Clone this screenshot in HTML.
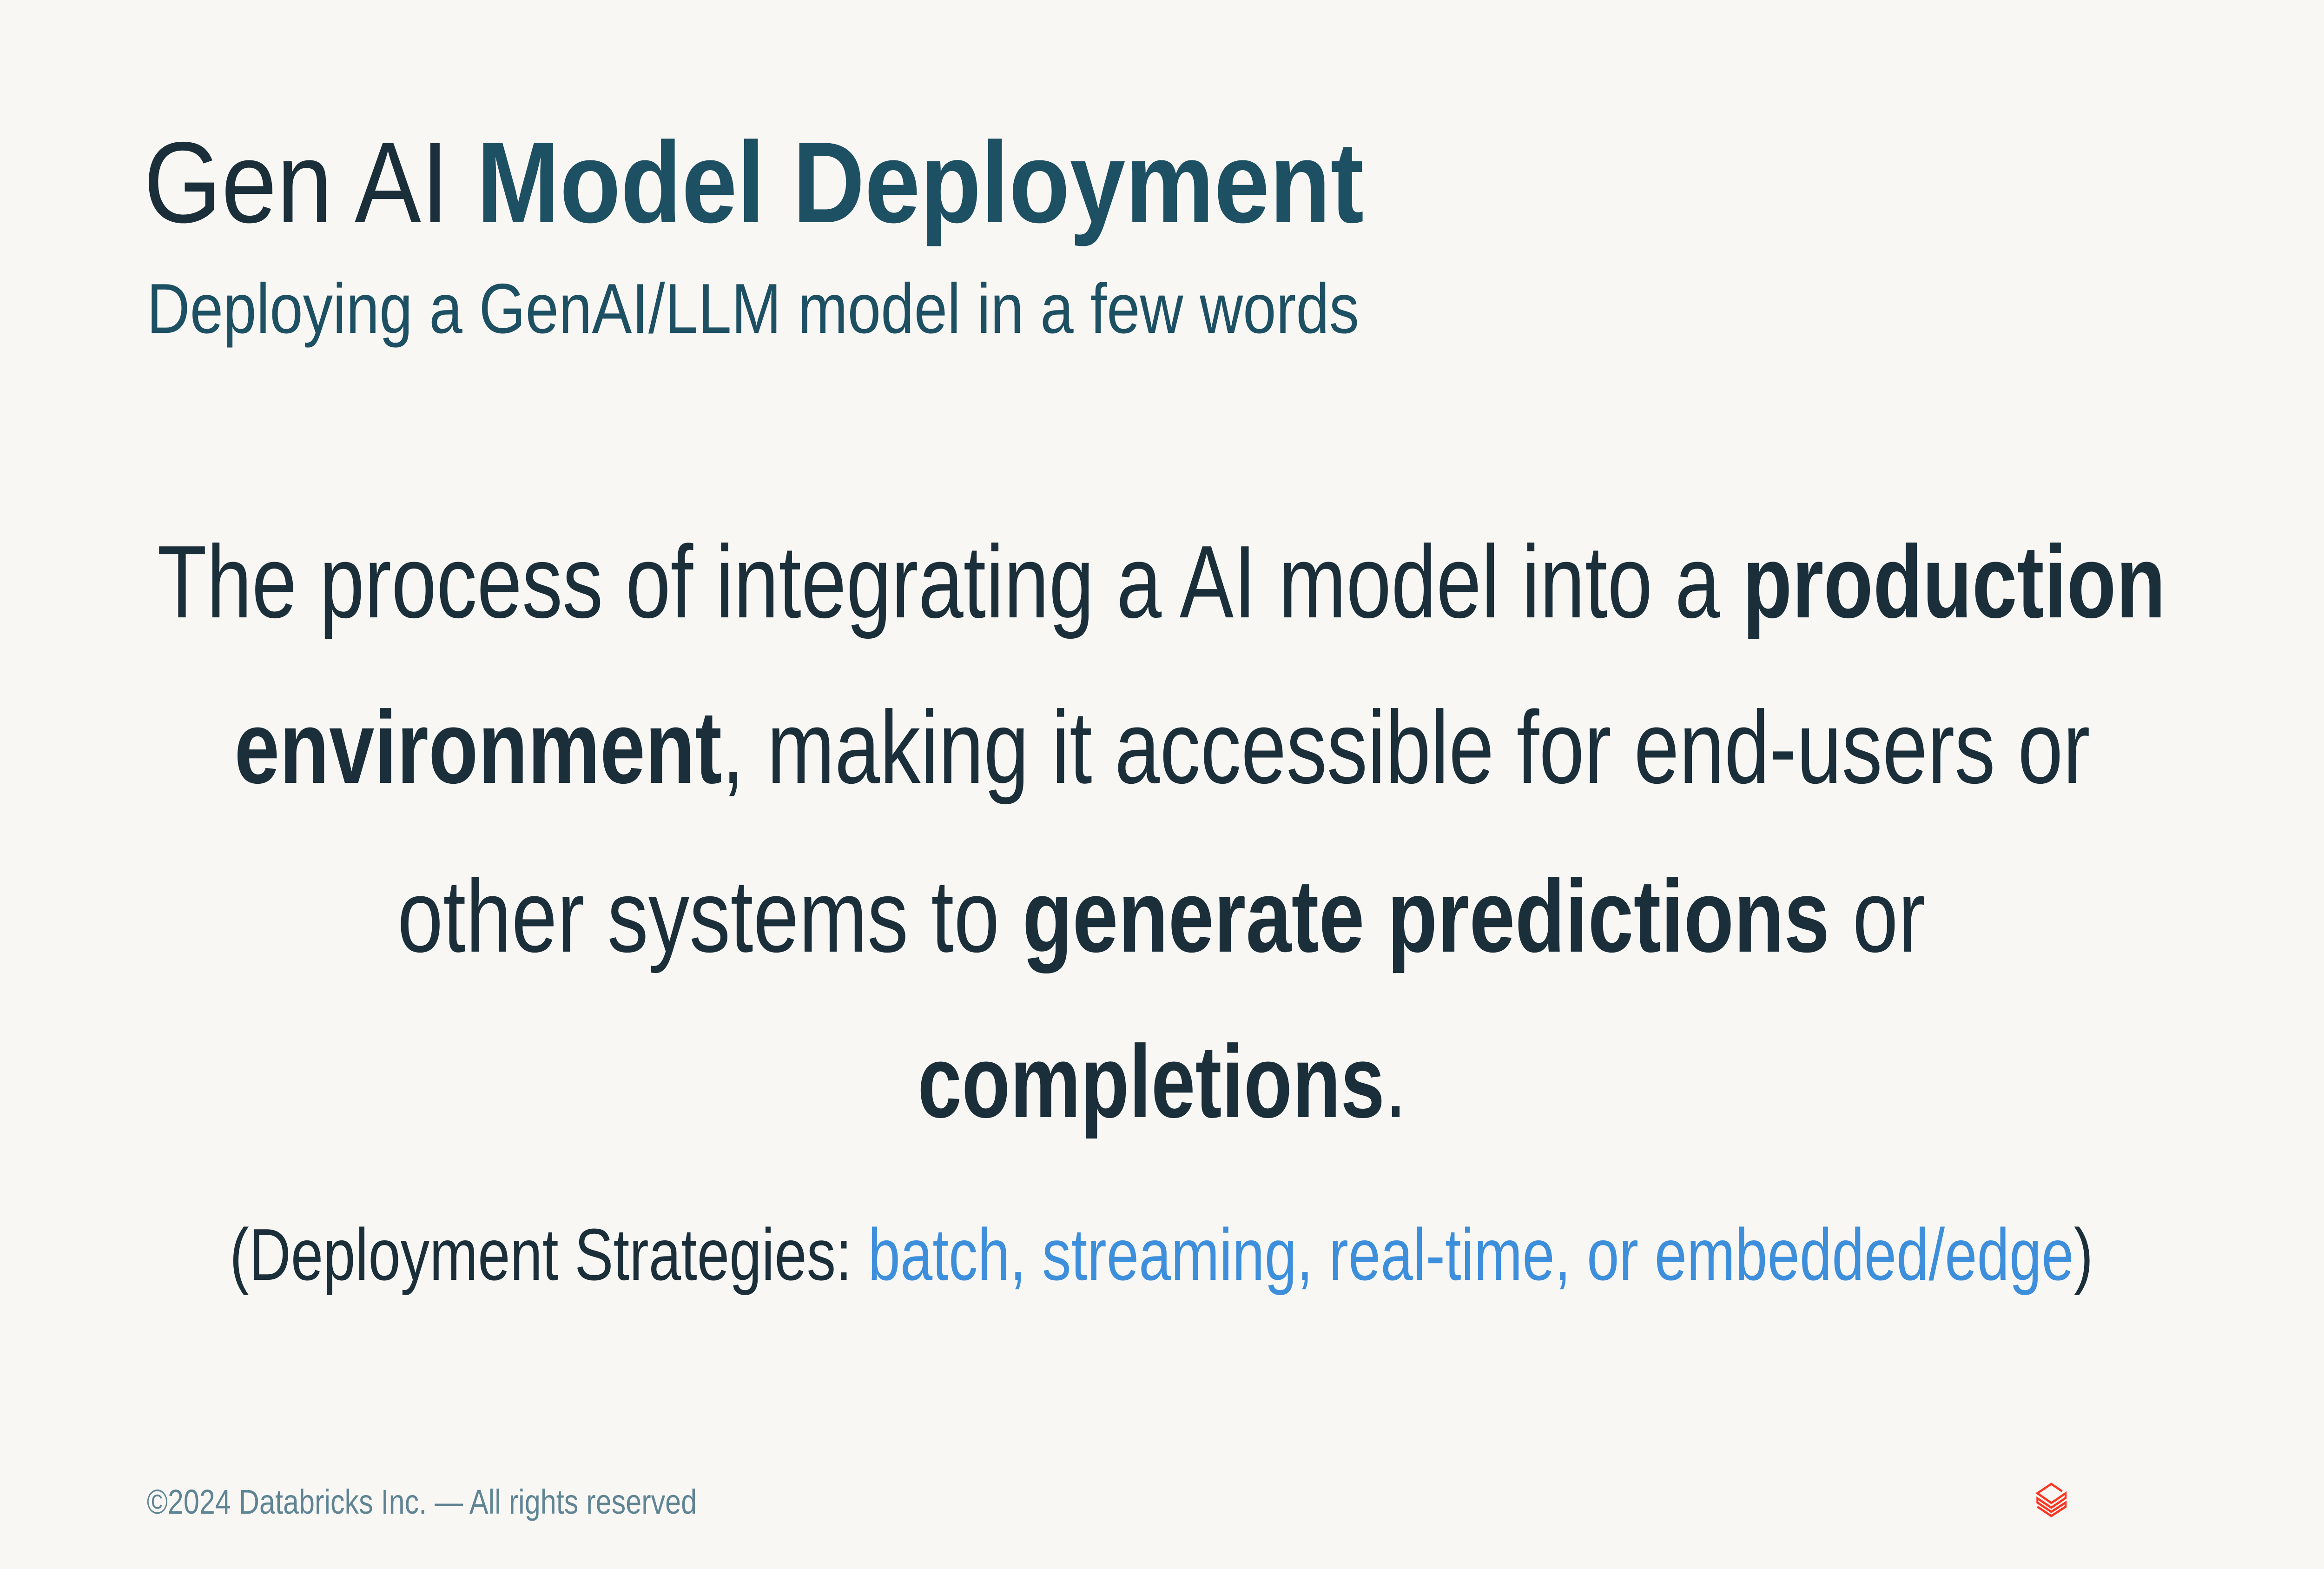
<!DOCTYPE html>
<html><head><meta charset="utf-8"><style>
html,body{margin:0;padding:0;background:#f9f7f4;width:100%;height:100%;overflow:hidden;}
svg{display:block;width:100vw;height:100vh}
text{font-family:"Liberation Sans",sans-serif;}
</style></head><body>
<svg viewBox="0 0 6000 3375" preserveAspectRatio="none" xmlns="http://www.w3.org/2000/svg">
<rect width="6000" height="3375" fill="#f9f7f4"/>
<text x="371" y="478" font-size="248" fill="#1b2f3a" textLength="3150" lengthAdjust="spacingAndGlyphs">Gen AI <tspan font-weight="bold" fill="#1d5063">Model Deployment</tspan></text>
<text x="379" y="716" font-size="152" fill="#1d5063" textLength="3130" lengthAdjust="spacingAndGlyphs">Deploying a GenAI/LLM model in a few words</text>
<g font-size="222" fill="#1b2f3a">
<text x="406" y="1328" textLength="5185" lengthAdjust="spacingAndGlyphs">The process of integrating a AI model into a <tspan font-weight="bold">production</tspan></text>
<text x="605" y="1684" textLength="4791" lengthAdjust="spacingAndGlyphs"><tspan font-weight="bold">environment</tspan>, making it accessible for end-users or</text>
<text x="1026" y="2047" textLength="3945" lengthAdjust="spacingAndGlyphs">other systems to <tspan font-weight="bold">generate predictions</tspan> or</text>
<text x="2369" y="2403" textLength="1263" lengthAdjust="spacingAndGlyphs"><tspan font-weight="bold">completions</tspan>.</text>
</g>
<text x="593" y="2753" font-size="158" fill="#1b2f3a" textLength="4811" lengthAdjust="spacingAndGlyphs">(Deployment Strategies: <tspan fill="#3d8fdb">batch, streaming, real-time, or embedded/edge</tspan>)</text>
<text x="379" y="3256" font-size="74" fill="#5f8494" textLength="1420" lengthAdjust="spacingAndGlyphs">©2024 Databricks Inc. — All rights reserved</text>
<path d="M5324,3208 L5296,3192 L5260,3212 L5296,3233 L5333,3212 V3222 L5296,3243 L5260,3223 V3232 L5296,3252 L5333,3232 V3241 L5296,3261 L5260,3241" fill="none" stroke="#ff3621" stroke-width="5" stroke-linejoin="miter"/>
</svg>
</body></html>
